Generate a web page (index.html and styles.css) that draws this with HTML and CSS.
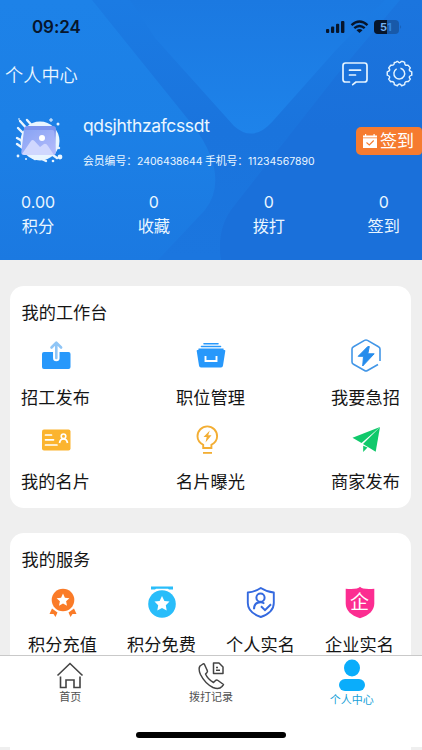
FILE: index.html
```html
<!DOCTYPE html>
<html lang="zh-CN">
<head>
<meta charset="utf-8">
<meta name="viewport" content="width=device-width, initial-scale=1">
<title>个人中心</title>
<link rel="stylesheet" href="styles.css">
</head>
<body>
<div class="app">
  <header class="hero">
    <svg class="hero-bg" viewBox="0 0 422 260" preserveAspectRatio="none" aria-hidden="true">
      <defs>
        <linearGradient id="band" x1="0" y1="0" x2="0" y2="1"><stop offset="0" stop-color="#1b7be3"/><stop offset=".5" stop-color="#1a74dd"/><stop offset="1" stop-color="#1b76df"/></linearGradient>
        <linearGradient id="vee" x1="0" y1="0" x2="0" y2="1"><stop offset="0" stop-color="#1b79e1"/><stop offset="1" stop-color="#1e83ea"/></linearGradient>
        <linearGradient id="left" x1="0" y1="0" x2="0" y2="1"><stop offset="0" stop-color="#1d82e8"/><stop offset=".5" stop-color="#1c80e6"/><stop offset="1" stop-color="#1b79e1"/></linearGradient>
        <linearGradient id="right" x1="0" y1="0" x2="0" y2="1"><stop offset="0" stop-color="#1b75de"/><stop offset=".5" stop-color="#1a70da"/></linearGradient>
      </defs>
      <rect width="422" height="260" fill="url(#left)"/>
      <path d="M92 0H422V260H158L205 210Q222 188 211 157Q204 139 191 123Z" fill="url(#band)"/>
      <path d="M422 0V260H221Q216 228 234 206L336 76L400 0Z" fill="url(#right)"/>
      <path d="M130 0H385L336 50L272 122Q253 143 234 126L155 38Z" fill="url(#vee)"/>
    </svg>
    <div class="status">
      <span class="clock">09:24</span>
      <svg class="signals" viewBox="0 0 76 16" aria-hidden="true">
        <g fill="#07152b"><rect x="0" y="10" width="3.2" height="4" rx="1"/><rect x="5" y="7.5" width="3.2" height="6.5" rx="1"/><rect x="10" y="4.7" width="3.2" height="9.3" rx="1"/><rect x="15" y="2" width="3.4" height="12" rx="1"/></g>
        <g fill="none" stroke="#07152b" stroke-width="2.4"><path d="M25.5 6.2Q33.5-1 41.5 6.2M28.3 9.2Q33.5 4.7 38.7 9.2"/></g>
        <path d="M30.5 11.2Q33.5 8.7 36.5 11.2L33.5 14Z" fill="#07152b"/>
        <rect x="48" y="1" width="25" height="14" rx="4" fill="#1859a9"/>
        <path d="M61 1H52Q48 1 48 5V11Q48 15 52 15H61Z" fill="#07152b"/>
        <path d="M74.3 6Q76 8 74.3 10Z" fill="#1859a9"/>
        <text class="battery" x="54" y="12" fill="#73b1f2">5<tspan fill="#2f86e4">1</tspan></text>
      </svg>
    </div>
    <div class="titlebar">
      <h1>个人中心</h1>
      <div class="actions">
        <svg width="26" height="24" viewBox="0 0 26 24" fill="none" stroke="#e5f4ff" stroke-width="1.7" stroke-linecap="round" stroke-linejoin="round" aria-hidden="true"><path d="M7.5 20H3.5Q1 20 1 17.500V3.500Q1 1 3.500 1H22.500Q25 1 25 3.500V17.500Q25 20 22.500 20H14L10.700 22.700M7.500 8.200H18.500M7.500 13H13.500"/></svg>
        <svg width="27" height="27" viewBox="0 0 28 28" fill="none" stroke="#e5f4ff" stroke-width="1.5" stroke-linejoin="round" aria-hidden="true"><path d="M10.300 2.300L11.200 1.500H12.200Q14 4 15.800 1.500H17.300L19.400 2.500Q18.900 6.200 22.800 5.300L25.200 8.200Q22.500 11 26.700 12.300V15.700Q22.500 17 25.200 19.800L23.200 22.400Q19 21.800 19.400 25.500L16.200 26.700Q14 23.200 11.800 26.700L8.600 25.500Q9 21.800 4.900 22.500L2.800 19.800Q5.400 17 1.300 15.700V12.300Q5.500 11 2.800 8.200L4.900 5.400Q9 6 8.600 2.500Z"/><path d="M11 9.200A5.600 5.600 0 1 0 15 8.600"/></svg>
      </div>
    </div>
    <div class="profile">
      <svg class="avatar" viewBox="0 0 48 48" aria-hidden="true">
        <defs><linearGradient id="pic" x1="0" y1="0" x2="1" y2="1"><stop offset="0" stop-color="#86a3f4"/><stop offset="1" stop-color="#b7bcfb"/></linearGradient></defs>
        <circle cx="25" cy="24" r="19.500" fill="#e9f5ff"/>
        <g stroke="#e9f5ff" stroke-width="2.4" stroke-linecap="round"><path d="M5 4L14 14M12 3L20 12M3 11L12 20M2 21L9 25M2 27L12 34M35 36L42 41M37 27L44 31M23 40L31 44M15 38L20 42"/></g>
        <g fill="#e9f5ff"><circle cx="43" cy="7" r="1.500"/><circle cx="3" cy="39" r="1.400"/><circle cx="45" cy="40" r="2.400"/><circle cx="38" cy="44" r="1.300"/><circle cx="11" cy="42" r="1"/></g>
        <path d="M36 1V5M34 3H38M4 1V3" stroke="#e9f5ff"/>
        <path d="M13 9H38Q41 9 41 12L40 34H10L9 12Q9 9 13 9Z" fill="#7f95ee"/>
        <path d="M9 13H37Q39.500 13 39.500 16L41 35Q41 38 38 38H9Q6 38 6.300 35Z" fill="url(#pic)"/>
        <path d="M7 37L16 24Q17.500 22 19.500 24L25 30L29 27Q31 26 33 29L39 38H9Z" fill="#d0d7fe"/><circle cx="27" cy="21" r="3" fill="#fff"/>
      </svg>
      <div class="identity">
        <div class="username">qdsjhthzafcssdt</div>
        <div class="member">会员编号：<span class="member-no">2406438644</span> 手机号：<span class="phone-no">11234567890</span></div>
      </div>
      <div class="checkin">
        <svg width="14" height="14" viewBox="0 0 14 14" aria-hidden="true"><path d="M0 1.500H2V0H3.200V1.500H10.500V0H11.700V1.500H14V3.500H0ZM0 4.300H14V14H0Z" fill="#fff"/><path d="M3.500 8.500L6.300 11L10.700 6.500" fill="none" stroke="#f67b2f" stroke-width="1.100"/></svg>
        <span>签到</span>
      </div>
    </div>
    <div class="stats">
      <div class="stat"><b>0.00</b><span>积分</span></div>
      <div class="stat"><b>0</b><span>收藏</span></div>
      <div class="stat"><b>0</b><span>拨打</span></div>
      <div class="stat"><b>0</b><span>签到</span></div>
    </div>
  </header>

  <main class="content">
    <section class="card workbench">
      <h2>我的工作台</h2>
      <div class="tools">
        <div class="item"><svg viewBox="0 0 34 34" aria-hidden="true"><rect x="3" y="13" width="28.500" height="17" rx="2" fill="#2798fb"/><path d="M17.300 19V6" stroke="#fff" stroke-width="6.500" stroke-linecap="round"/><path d="M17.300 19V4.500M12.500 8.500L17.300 3.700L22.100 8.500" fill="none" stroke="#8fc5f6" stroke-width="2.600" stroke-linecap="round" stroke-linejoin="round"/></svg><span>招工发布</span></div>
        <div class="item"><svg viewBox="0 0 34 34" aria-hidden="true"><path d="M10 4.800H24M7.500 7.500H26.500M5 10.300H29" stroke="#2798fb" stroke-width="1.600" stroke-linecap="round"/><path d="M3.500 11H30.500Q31.500 11 31.300 12L29 26.500Q28.800 28.500 27 28.500H7Q5.200 28.500 5 26.500L2.700 12Q2.500 11 3.500 11Z" fill="#2798fb"/><path d="M11.500 17V22H22.500V17" fill="none" stroke="#fff" stroke-width="1.900"/></svg><span>职位管理</span></div>
        <div class="item"><svg viewBox="0 0 34 34" aria-hidden="true"><path d="M31 22V10Q31 8.500 29.500 7.700L18.500 1.400Q17 .6 15.500 1.400L4.500 7.700Q3 8.500 3 10V23Q3 24.500 4.500 25.300L15.500 31.500Q17 32.400 18.500 31.500L29 25.500" fill="none" stroke="#4296e7" stroke-width="1.600"/><path d="M18.800 7.500L9.200 17.300H14.500L13.700 27L25.200 14.800H18.800L20.300 7.500Z" fill="#258cec" stroke="#258cec" stroke-linejoin="round"/></svg><span>我要急招</span></div>
        <div class="item"><svg viewBox="0 0 34 34" aria-hidden="true"><rect x="3" y="6.500" width="28.500" height="21" rx="2" fill="#fbb42e"/><path d="M6.500 12H12.500M6.500 16.800H14.500M6.500 22H18" stroke="#fff" stroke-width="1.700" stroke-linecap="round"/><circle cx="24.500" cy="13.300" r="2.300" fill="none" stroke="#fff" stroke-width="1.600"/><path d="M20.500 20Q21.200 15.800 24.500 15.800T28.500 20" fill="none" stroke="#fff" stroke-width="1.700"/></svg><span>我的名片</span></div>
        <div class="item"><svg viewBox="0 0 34 34" aria-hidden="true"><path d="M9.200 25V21.800Q3.500 18.500 3.500 13.200A9.800 9.800 0 0 1 23.100 13.200Q23.100 18.500 17.400 21.800V25Z" fill="none" stroke="#f3ae34" stroke-width="1.900"/><path d="M9 29.900H18" stroke="#f3ae34" stroke-width="1.800"/><path d="M15.800 7.500L9.500 14H12.700L11.500 19.500L17.500 12.200H14.200Z" fill="#f3ae34"/></svg><span>名片曝光</span></div>
        <div class="item"><svg viewBox="0 0 34 34" aria-hidden="true"><path d="M31 4L3.500 14.800L12.500 20Z" fill="#10c96b"/><path d="M31 4L14 21L26.700 28.700Z" fill="#10c96b"/><path d="M14.200 22.700L18.500 24.500L14.200 29Z" fill="#10c96b"/></svg><span>商家发布</span></div>
      </div>
    </section>
    <section class="card services">
      <h2>我的服务</h2>
      <div class="service-list">
        <div class="item"><svg viewBox="0 0 34 34" aria-hidden="true"><circle cx="17" cy="14" r="11.300" fill="#fa7b28"/><path d="M17 7.500L18.900 11.700L23.400 12.200L20.100 15.300L21 19.700L17 17.500L13 19.700L13.900 15.300L10.600 12.200L15.100 11.700Z" fill="#fff"/><path d="M6 22.500L11.500 26.500L9.500 31L7.500 28L3.500 28ZM28 22.500L22.500 26.500L24.500 31L26.500 28L30.500 28Z" fill="#fa7b28"/></svg><span>积分充值</span></div>
        <div class="item"><svg viewBox="0 0 34 34" aria-hidden="true"><path d="M6 .5H28V3.500H24L23 2.800H11L10 3.500H6Z" fill="#29bdfa"/><circle cx="17" cy="18" r="13.800" fill="#29bdfa"/><path d="M17 10L19.400 14.900L24.500 15.600L20.800 19.200L21.700 24.500L17 22L12.300 24.500L13.200 19.200L9.500 15.600L14.600 14.900Z" fill="#fff"/></svg><span>积分免费</span></div>
        <div class="item"><svg viewBox="0 0 34 34" aria-hidden="true"><path d="M16.800 2Q23 6 29.800 6.500V17Q29.800 26.500 16.800 31Q3.800 26.500 3.800 17V6.500Q10.600 6 16.800 2Z" fill="none" stroke="#3469df" stroke-width="1.900" stroke-linejoin="round"/><circle cx="16.500" cy="11.700" r="4.100" fill="none" stroke="#3469df" stroke-width="2"/><path d="M10 23.200Q10 16.200 16.500 16.200Q19 16.200 20.200 17.700M17 20.200L21 24.200L27 18.200" fill="none" stroke="#3469df" stroke-width="2"/></svg><span>个人实名</span></div>
        <div class="item"><svg viewBox="0 0 34 34" aria-hidden="true"><path d="M17 .7Q19.500 3.700 31.300 2.700V17.700Q31 27.700 17 32.200Q3 27.700 2.700 17.700V2.700Q14.500 3.700 17 .7Z" fill="#fc2d91"/><text class="seal" x="16.500" y="22.500" text-anchor="middle" fill="#fff">企</text></svg><span>企业实名</span></div>
      </div>
    </section>
  </main>

  <nav class="tabs">
    <div class="tab"><svg viewBox="0 0 34 32" fill="none" stroke="#444" stroke-width="1.600" aria-hidden="true"><path d="M4.500 16.500L17 4.500L29.500 16.500M7.500 17.500V28.500H13V21H21V28.500H27V17.500"/></svg><span>首页</span></div>
    <div class="tab"><svg viewBox="0 0 34 32" fill="none" stroke="#444" stroke-width="1.500" stroke-linejoin="round" aria-hidden="true"><path d="M9 5L6 7Q4 10 6.500 15.500Q11 24.500 19 28.500Q25 31 28 27.500L29.500 25.500L24 21.500Q22.500 20.500 21 22L19.500 23.500Q14 20.500 11.500 15L13 13.500Q14 12.500 13 11L10.500 5.500Q10 4.500 9 5ZM19.500 4H25L29 8V14.500H19.500ZM22 8.500H24M22 11.300H26"/></svg><span>拨打记录</span></div>
    <div class="tab active"><svg viewBox="0 0 34 32" fill="#0aadfb" aria-hidden="true"><ellipse cx="17" cy="9" rx="8" ry="8.500"/><rect x="4" y="20" width="26" height="12" rx="6"/></svg><span>个人中心</span></div>
    <i class="home-bar"></i>
  </nav>
  <div class="under"></div>
</div>
</body>
</html>
```
FILE: styles.css
```css
* { box-sizing: border-box; }
body {
  margin: 0;
  background: #efefef;
  font-family: "Noto Sans CJK SC", sans-serif;
  color: #151515;
}
h1, h2 { margin: 0; font-weight: 400; }
svg { display: block; flex: none; }
.app { width: 422px; height: 750px; display: flex; flex-direction: column; overflow: hidden; }

.hero { position: relative; height: 260px; flex: none; color: #eaf6ff; }
.hero-bg { position: absolute; inset: 0; width: 100%; height: 100%; }
.hero > div { position: relative; }
.status { height: 52px; padding: 17px 20px 0 32px; display: flex; justify-content: space-between; }
.clock { font: 600 17px/20px Inter, sans-serif; color: #07152b; letter-spacing: -.1px; }
.signals { width: 76px; height: 16px; margin-top: 2px; }
.battery { font: 700 11px Inter, sans-serif; }
.titlebar { height: 44px; padding: 0 9px 0 5px; display: flex; align-items: center; justify-content: space-between; }
.titlebar h1 { font-size: 18.200px; line-height: 24px; font-weight: 350; }
.actions { display: flex; gap: 18px; align-items: center; padding-bottom: 1px; }

.profile { height: 89px; padding-left: 15px; display: flex; }
.avatar { width: 48px; height: 48px; margin-top: 21px; }
.identity { margin-left: 20px; padding-top: 19px; flex: 1; white-space: nowrap; }
.username { font: 400 17.500px/22px Inter, sans-serif; letter-spacing: -.35px; }
.member { margin-top: 15px; font: 400 10.800px/16px "Noto Sans CJK SC", sans-serif; }
.member-no, .phone-no { font-family: Inter, sans-serif; font-size: 10.500px; }
.member-no { letter-spacing: -.05px; }
.checkin {
  width: 66px; height: 28px; margin-top: 31px; padding-left: 7px;
  display: flex; align-items: center; gap: 3px;
  border-radius: 5px 4px 4px 5px; background: #f67b2f; color: #fff;
  font-size: 17px; line-height: 26px;
}
.checkin span { margin-top: -2px; }
.stats { padding: 5px 22px 0 21px; display: flex; justify-content: space-between; }
.stat { display: flex; flex-direction: column; align-items: center; }
.stat b { font: 400 16px/24px Inter, sans-serif; }
.stat span { font-size: 16.200px; line-height: 24px; margin-top: -1px; }

.content { flex: 1; min-height: 0; padding: 26px 11px 0 10px; overflow: hidden; }
.card { background: #fff; border-radius: 14px; }
.card h2 { font-size: 17.200px; line-height: 26px; padding-left: 11.500px; }
.workbench { height: 222px; padding-top: 13px; }
.tools { padding: 13.500px 11px 0; display: grid; grid-template-columns: repeat(3, 69px); justify-content: space-between; grid-auto-rows: 84.500px; }
.item { display: flex; flex-direction: column; align-items: center; white-space: nowrap; font-size: 17.200px; line-height: 26px; }
.item svg { width: 34px; height: 34px; margin-bottom: 11px; }
.services { height: 160px; margin-top: 25px; padding-top: 13px; }
.service-list { padding: 13.500px 0 0 3px; display: grid; grid-template-columns: repeat(4, 99px); }
.seal { font: 400 19px "Noto Sans CJK SC", sans-serif; }

.tabs { position: relative; height: 92px; flex: none; background: #fff; border-top: 1px solid #c9c9c9; display: grid; grid-template-columns: repeat(3, 1fr); }
.tab { padding-top: 3px; display: flex; flex-direction: column; align-items: center; font-size: 11px; line-height: 16px; color: #505050; }
.tab svg { width: 34px; height: 32px; margin-bottom: -3px; }
.tab.active { color: #189fd8; }
.tab.active svg { margin-bottom: 0; }
.home-bar { position: absolute; left: 136px; top: 76px; width: 150px; height: 6px; border-radius: 3px; background: #000; }
.under { height: 3px; flex: none; margin: 0 11px 0 10px; background: #fff; }
```
